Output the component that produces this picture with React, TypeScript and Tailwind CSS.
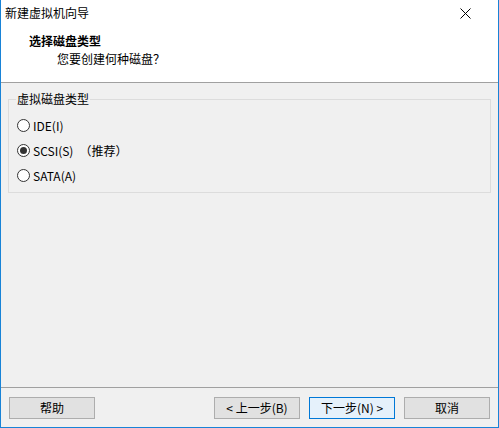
import React, { useState } from "react";

const FONT = "font-['Microsoft_YaHei','Noto_Sans_CJK_SC','Noto_Sans',sans-serif]";

type DiskType = "ide" | "scsi" | "sata";

const OPTIONS: { key: DiskType; label: string; note?: string }[] = [
  { key: "ide", label: "IDE(I)" },
  { key: "scsi", label: "SCSI(S)", note: "（推荐）" },
  { key: "sata", label: "SATA(A)" },
];

function Radio({ checked }: { checked: boolean }) {
  return (
    <span className="flex h-[13px] w-[13px] items-center justify-center rounded-full border border-[#333] bg-white">
      {checked && <span className="h-[7px] w-[7px] rounded-full bg-[#333]" />}
    </span>
  );
}

function Button({ children, primary }: { children: React.ReactNode; primary?: boolean }) {
  return (
    <button
      className={
        "flex h-[22px] w-[86px] items-center justify-center border text-[12px] text-black " +
        (primary ? "border-[#0078d7] bg-[#e5f1fb]" : "border-[#adadad] bg-[#e1e1e1]")
      }
    >
      {children}
    </button>
  );
}

export default function App() {
  const [disk, setDisk] = useState<DiskType>("scsi");

  return (
    <div className={"flex h-[428px] w-[499px] flex-col border-x border-b border-[#1883d7] bg-[#f0f0f0] text-black " + FONT}>
      {/* Kopf */}
      <div className="h-[83px] border-b border-[#a0a0a0] bg-white">
        <div className="flex h-[26px] items-center justify-between pl-[4px] pr-[27px] text-[12px]">
          <span>新建虚拟机向导</span>
          <svg width="11" height="11" viewBox="0 0 11 11" className="text-black">
            <path d="M0.5 0.5 L10.5 10.5 M10.5 0.5 L0.5 10.5" stroke="currentColor" strokeWidth="1" />
          </svg>
        </div>
        <div className="mt-[7px] pl-[28px] text-[12px] font-bold leading-[16px]">选择磁盘类型</div>
        <div className="mt-[2px] pl-[56px] text-[12px] leading-[16px]">您要创建何种磁盘？</div>
      </div>

      {/* Inhalt */}
      <div className="flex-1 px-[7px] pt-[8px]">
        <fieldset className="h-[102px] border border-[#dcdcdc] pl-[8px]">
          <legend className="ml-[-1px] px-[1px] text-[12px] leading-[16px]">虚拟磁盘类型</legend>
          <div className="mt-[10px] flex flex-col gap-[8px]">
            {OPTIONS.map((o) => (
              <label key={o.key} className="flex h-[17px] cursor-default items-center text-[12px]" onClick={() => setDisk(o.key)}>
                <Radio checked={disk === o.key} />
                <span className="ml-[3px]">{o.label}</span>
                {o.note && <span className="ml-[6px]">{o.note}</span>}
              </label>
            ))}
          </div>
        </fieldset>
      </div>

      {/* Fußleiste */}
      <div className="flex h-[40px] items-start border-t border-[#a0a0a0] pl-[8px] pr-[8px] pt-[9px]">
        <Button>帮助</Button>
        <div className="ml-auto flex gap-[9px]">
          <Button>&lt; 上一步(B)</Button>
          <Button primary>下一步(N) &gt;</Button>
          <Button>取消</Button>
        </div>
      </div>
    </div>
  );
}
